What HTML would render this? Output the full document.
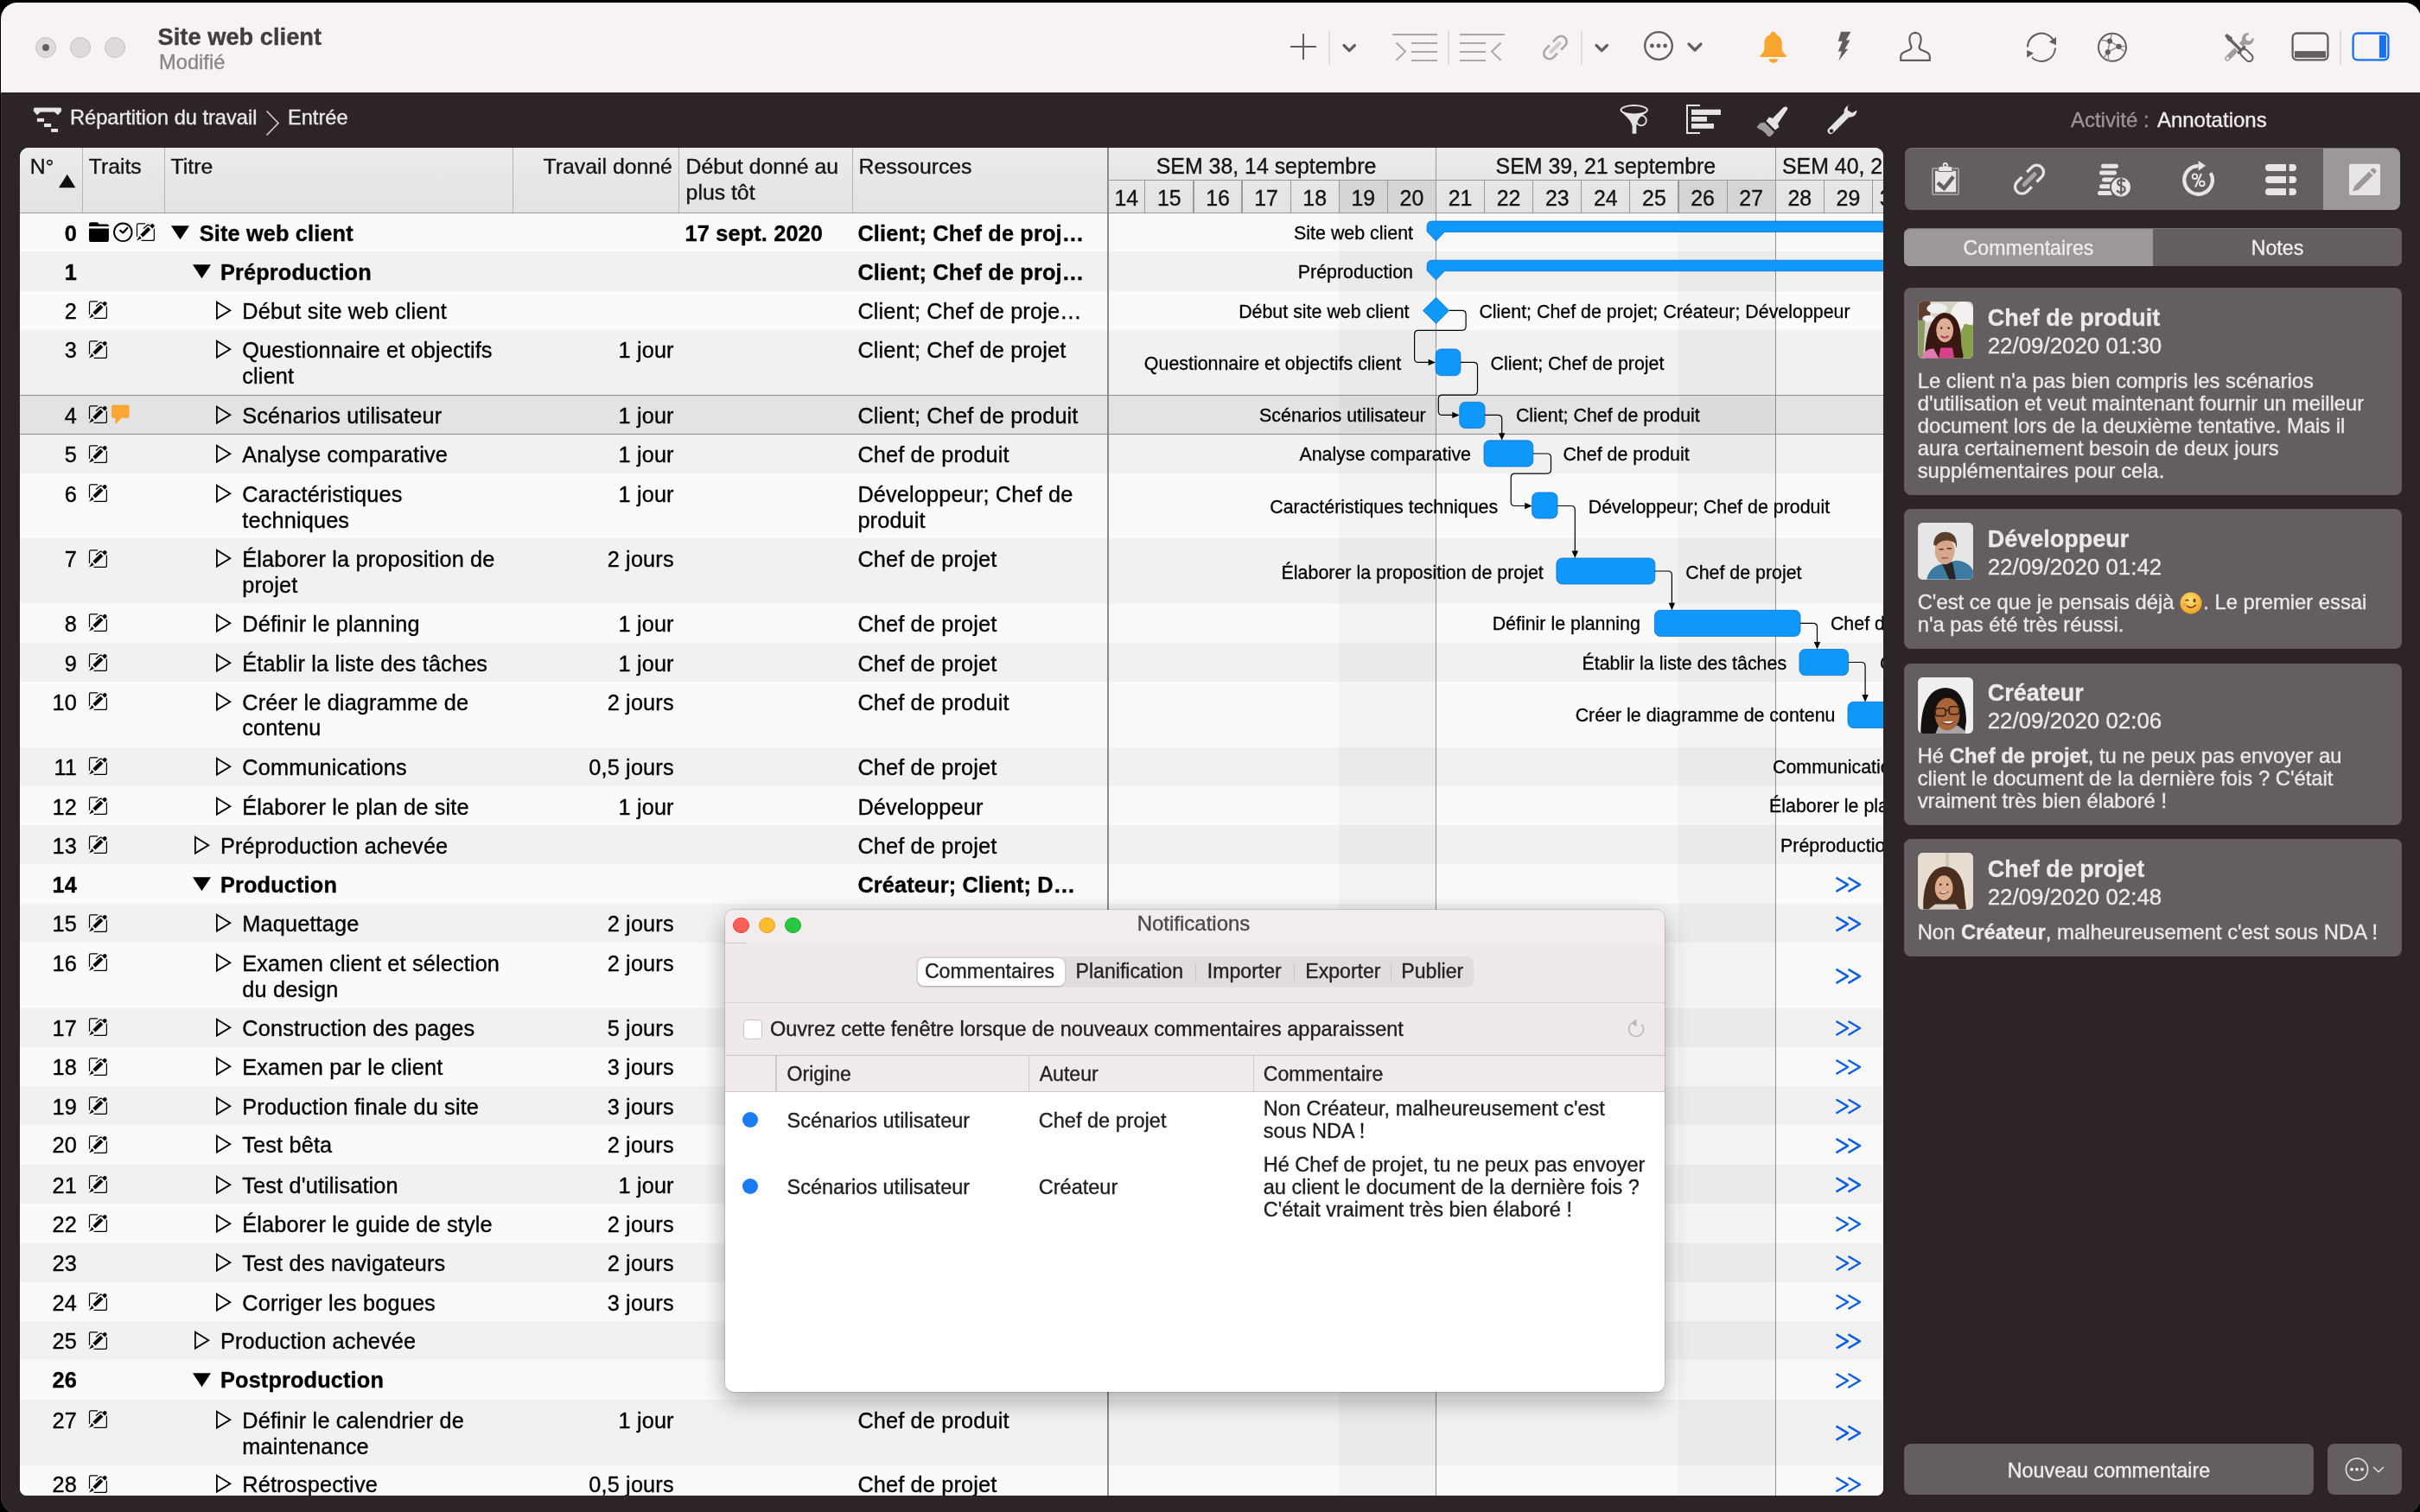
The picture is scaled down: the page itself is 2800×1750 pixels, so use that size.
<!DOCTYPE html>
<html><head><meta charset="utf-8"><title>Site web client</title>
<style>
*{box-sizing:border-box;margin:0;padding:0}
html,body{width:2800px;height:1750px;overflow:hidden;background:#000;font-family:"Liberation Sans", sans-serif}
.win{will-change:transform;position:absolute;left:1px;top:3px;width:2800px;height:1748.6px;border-radius:19px;overflow:hidden;background:#2d2428}
.pg{position:absolute;left:-1px;top:-3px;width:2800px;height:1750px}
.a{position:absolute;white-space:nowrap;-webkit-text-stroke:0.35px currentColor}
svg{position:absolute;overflow:visible}
.tb{position:absolute;left:0;top:0;width:2800px;height:107px;background:#f7f2f3}
.row{position:absolute;left:23px;width:1259px}
.gr{position:absolute;left:1282px;width:898px}
.t{position:absolute;font-size:25.3px;line-height:29.7px;color:#000;white-space:nowrap;letter-spacing:0.15px;-webkit-text-stroke:0.35px currentColor}
.b{font-weight:bold}
.gl{position:absolute;font-size:21.4px;line-height:26px;color:#000;white-space:nowrap;-webkit-text-stroke:0.3px currentColor}

.av{background:#ccc}
.w1{background:radial-gradient(ellipse 30% 34% at 50% 48%,#e8b59a 0 60%,transparent 62%),radial-gradient(ellipse 45% 55% at 48% 55%,#4a2418 0 70%,transparent 72%),linear-gradient(160deg,#d8d2c4,#a8b880 60%,#c0407a 85%)}
.m1{background:radial-gradient(ellipse 26% 30% at 50% 45%,#d9a88e 0 60%,transparent 62%),radial-gradient(ellipse 32% 22% at 50% 22%,#7a5a40 0 70%,transparent 72%),linear-gradient(#e8e8e6 0 70%,#3f7fb0 70%)}
.w2{background:radial-gradient(ellipse 28% 32% at 52% 55%,#8a5232 0 60%,transparent 62%),radial-gradient(ellipse 42% 50% at 50% 60%,#1a1512 0 70%,transparent 72%),linear-gradient(#f2f0ee,#e6e4e2)}
.w3{background:radial-gradient(ellipse 26% 30% at 50% 55%,#e0b49a 0 60%,transparent 62%),radial-gradient(ellipse 42% 46% at 50% 58%,#5a3a28 0 70%,transparent 72%),linear-gradient(#e8e2d8,#d8d0c4)}
.emo{display:inline-block;width:26px;height:26px;border-radius:50%;background:radial-gradient(circle at 45% 40%,#ffd86a,#f4a820);vertical-align:-5px;margin:0 2px}
</style></head>
<body>
<svg width="0" height="0" style="position:absolute">
<defs>
<symbol id="note" viewBox="0 0 28 28">
 <path d="M12.6 4.8H5.2Q3.5 4.8 3.5 6.5V19.4M23.4 11.1V22.4Q23.4 24.4 21.4 24.4H9.1" fill="none" stroke="#000" stroke-width="1.2" stroke-linecap="round"/>
 <path d="M7.4 17.6L16.3 8.7L19.3 11.7L10.4 20.6Z" fill="#000"/>
 <path d="M3.1 24.6L6.5 19.1L8.7 21.9Z" fill="#000"/>
 <path d="M18.2 7.4L20 5.6Q21.4 4.4 22.8 5.7L23.1 6Q24.3 7.5 23 8.9L21.1 10.6Z" fill="#000"/>
 <path d="M11.1 10.6L15.6 6.5Q16.6 5.7 18.2 7" fill="none" stroke="#000" stroke-width="1.3"/>
</symbol>
<symbol id="folder" viewBox="0 0 60 40">
 <path d="M3 12.5Q3 10.2 5.3 10.2H11.5Q13.2 10.2 14 11.5L14.6 12.6H23.8Q25.9 12.6 25.9 14.5V15H3Z" fill="#000"/>
 <path d="M3 17.6H25.9V31Q25.9 33 23.9 33H5Q3 33 3 31Z" fill="#000"/>
 <circle cx="42.3" cy="21.8" r="10.3" fill="none" stroke="#000" stroke-width="1.9"/>
 <path d="M39.2 19.8L42.3 22.4L47.3 16.9" fill="none" stroke="#000" stroke-width="2.2" stroke-linecap="round" stroke-linejoin="round"/>
</symbol>
<symbol id="bubble" viewBox="0 0 30 40">
 <path d="M5 10.7H21.6Q23.6 10.7 23.6 12.7V23.7Q23.6 25.7 21.6 25.7H14.5L7.5 33.5V25.7H5Q3 25.7 3 23.7V12.7Q3 10.7 5 10.7Z" fill="#fda631"/>
</symbol>
</defs></svg>
<div class="win"><div class="pg">
<div class="tb"></div>
<div class="a" style="left:41px;top:43px;width:24px;height:24px;border-radius:50%;background:#dedadb;border:1px solid #c4bfc0"></div><div class="a" style="left:81px;top:43px;width:24px;height:24px;border-radius:50%;background:#dedadb;border:1px solid #c4bfc0"></div><div class="a" style="left:121px;top:43px;width:24px;height:24px;border-radius:50%;background:#dedadb;border:1px solid #c4bfc0"></div><div class="a" style="left:49px;top:51px;width:8px;height:8px;border-radius:50%;background:#625d5f"></div><div class="a" style="left:182.5px;top:26.8px;font-size:27.3px;line-height:32px;font-weight:bold;color:#413c3e">Site web client</div><div class="a" style="left:184px;top:57.5px;font-size:23.7px;line-height:28px;color:#8a8587">Modifié</div>
<svg style="left:0;top:0" width="2800" height="107">
 <g stroke="#615c5e" stroke-width="2" fill="none">
  <path d="M1493 54H1523M1508 39V69"/>
 </g>
 <g stroke="#e2dddf" stroke-width="2"><path d="M1538 35V75M1676 35V75M1830 35V75M2708 35V75"/></g>
 <g stroke="#615c5e" stroke-width="3.2" fill="none" stroke-linecap="round" stroke-linejoin="round">
  <path d="M1555 52.5L1561.2 58.7L1567.4 52.5"/>
  <path d="M1847 52.5L1853.2 58.7L1859.4 52.5"/>
  <path d="M1954 51L1961 58L1968 51"/>
 </g>
 <g stroke="#aca6a8" stroke-width="2" fill="none">
  <path d="M1611 40H1663M1633 50H1663M1633 60H1663M1633 70H1663M1615.5 49.5L1626 59.6L1615.5 69.7"/>
  <path d="M1689 40H1741M1689 50H1719M1689 60H1719M1689 70H1719M1736.5 49.5L1726 59.6L1736.5 69.7"/>
 </g>
 <g transform="translate(1799.5 55) rotate(-45)" fill="none" stroke="#aca6a8" stroke-width="2.6">
  <path d="M-3 -6.5H-9.5A6.5 6.5 0 0 0 -9.5 6.5H-3"/>
  <path d="M3 -6.5H9.5A6.5 6.5 0 0 1 9.5 6.5H3"/>
  <path d="M-7 0H7" stroke="#d2cdce" stroke-width="4.2" stroke-linecap="round"/>
 </g>
 <circle cx="1919" cy="53" r="15.8" fill="none" stroke="#615c5e" stroke-width="2.3"/>
 <g fill="#615c5e"><circle cx="1911.4" cy="53" r="2.4"/><circle cx="1919" cy="53" r="2.4"/><circle cx="1926.6" cy="53" r="2.4"/></g>
 <path fill="#f9a630" d="M2051.6 36.8c-2 0-3.3 1.4-3.6 3.4c-4.5 1.4-6.6 5.3-6.6 10.3v5.6c0 3-1.8 5.6-4.9 8.3c-0.8 0.7-0.7 1.5 0.3 1.5h29.6c1 0 1.1-0.8 0.3-1.5c-3.1-2.7-4.9-5.3-4.9-8.3v-5.6c0-5-2.1-8.9-6.6-10.3c-0.3-2-1.6-3.4-3.6-3.4zM2046.8 68.2h10.2c0 2.5-2.2 4.5-5.1 4.5s-5.1-2-5.1-4.5z"/>
 <path fill="#615c5e" d="M2130 36.8L2141.4 36.8L2135.9 46.4L2140.5 46.4L2134.5 56.8L2138.2 56.8L2127.3 70.5L2130.9 59.5L2126.8 59.5L2131.8 47.7L2126.8 47.7Z"/>
 <path fill="none" stroke="#615c5e" stroke-width="2.2" stroke-linejoin="round" d="M2216 37.9c-4 0-6.6 3.2-6.6 7.5c0 2.8 0.5 5 1.4 6.8c0.7 1.5 0.8 3.6-0.3 4.6c-1 1-5.6 2.8-7.6 3.6c-2.3 1-3.7 2.6-3.7 5.6v3.9h33.6v-3.9c0-3-1.4-4.6-3.7-5.6c-2-0.8-6.6-2.6-7.6-3.6c-1.1-1-1-3.1-0.3-4.6c0.9-1.8 1.4-4 1.4-6.8c0-4.3-2.6-7.5-6.6-7.5z"/>
 <g fill="none" stroke="#615c5e" stroke-width="2">
  <path d="M2346 54.5A16 16 0 0 1 2375.5 46"/>
  <path d="M2378 55.5A16 16 0 0 1 2351 66.5"/>
 </g>
 <g fill="#615c5e"><path d="M2379 43L2379 52.3L2370.9 48.6Z"/><path d="M2345.2 57.9L2345.2 66.8L2353 61.6Z"/></g>
 <circle cx="2444" cy="54.8" r="16" fill="none" stroke="#615c5e" stroke-width="2"/>
 <g stroke="#9a9597" stroke-width="1.6" fill="none">
  <path d="M2441 47.6L2451.5 53.8L2438.8 60.3L2441 47.6M2441 47.6L2443.6 39.5M2441 47.6L2431 46.5M2451.5 53.8L2459.5 53.5M2451.5 53.8L2457.5 59.5M2438.8 60.3L2434 67M2438.8 60.3L2440 71"/>
 </g>
 <g fill="#615c5e"><circle cx="2441" cy="47.6" r="3.1"/><circle cx="2451.5" cy="53.8" r="3.1"/><circle cx="2438.8" cy="60.3" r="3.1"/></g>
 <g>
  <path d="M2577.3 67.6L2597 47.9" stroke="#a09c9d" stroke-width="6" stroke-linecap="round"/>
  <circle cx="2600.8" cy="45" r="6.9" fill="#a09c9d"/>
  <circle cx="2602" cy="43.8" r="3.6" fill="#f7f2f3"/>
  <path d="M2602 43.8L2601.5 35L2612 35L2612 46L2610 44.3Z" fill="#f7f2f3"/>
  <circle cx="2577.4" cy="67.5" r="1.7" fill="#f7f2f3"/>
  <path d="M2578.5 43L2593.5 58" stroke="#f7f2f3" stroke-width="7.5"/>
  <path d="M2574.1 41.3L2576.4 39.1L2582.8 43.6L2582.8 44.9L2580.8 47.7L2578.3 47.7Z" fill="#676163"/>
  <path d="M2580 45.5L2592.5 58" stroke="#676163" stroke-width="3.6"/>
  <path d="M2590.3 61L2596.8 54.5" stroke="#676163" stroke-width="3.2" stroke-linecap="round"/>
  <rect x="-8.3" y="-4.3" width="16.6" height="8.6" rx="4.3" transform="translate(2599.4 64) rotate(45)" fill="#f7f2f3" stroke="#676163" stroke-width="2.1"/>
 </g>
 <rect x="2652.6" y="38.5" width="40.8" height="30.8" rx="5" fill="none" stroke="#615c5e" stroke-width="2.3"/>
 <rect x="2655" y="59.1" width="36" height="7.7" fill="#615c5e"/>
 <rect x="2722.6" y="38.5" width="40.8" height="30.8" rx="5" fill="none" stroke="#1570f2" stroke-width="2.3"/>
 <rect x="2752.9" y="40.9" width="8" height="25.9" fill="#1570f2"/>
</svg>

<svg style="left:0;top:0" width="400" height="171">
 <path fill="#e6e3e4" stroke="#e6e3e4" stroke-width="0.8" stroke-linejoin="round" d="M40.2 125H69.9Q70.7 125 70.7 126V128.7L67 132.7L62.8 129.2H46.9L42.9 132.7L39.3 128.7V126Q39.3 125 40.2 125Z"/>
 <g fill="#e6e3e4"><rect x="42.9" y="136.9" width="8.1" height="4"/><rect x="51" y="143" width="8.1" height="4"/><rect x="59.1" y="149" width="7.9" height="3.9"/></g>
 <path d="M308.5 128.5L322 142.5L308.5 156.5" fill="none" stroke="#cfcbcc" stroke-width="1.7"/>
</svg>
<div class="a" style="left:81px;top:122px;font-size:23.6px;line-height:28px;color:#ebe8e9">Répartition du travail</div>
<div class="a" style="left:333px;top:122px;font-size:23.6px;line-height:28px;color:#ebe8e9">Entrée</div>
<svg style="left:0;top:0" width="2200" height="171">
 <g fill="#e6e3e4">
  <ellipse cx="1890.7" cy="127.3" rx="15.2" ry="5.2" fill="none" stroke="#e6e3e4" stroke-width="2"/>
  <path d="M1876 129C1880 134 1887 138 1888.6 146V154.8H1893.3V146C1894 140 1896 136 1904.8 130C1900 133 1882 133 1876 129Z"/>
  <circle cx="1899" cy="139.5" r="5.8" fill="none" stroke="#e6e3e4" stroke-width="1.8"/>
  <path d="M1952 122V154M1951 122H1967M1951 154H1967" stroke="#e6e3e4" stroke-width="2" fill="none"/>
  <rect x="1957" y="126.7" width="34" height="6.3"/><rect x="1957" y="135" width="18" height="5.7"/><rect x="1957" y="143" width="26" height="5.8"/>
  <path d="M2066 123.5c1.5 0 2.8 1.4 2.3 2.8L2057 143L2058.5 147L2054 150.5L2043.5 140L2047 135.5L2051 137L2063.5 124.2c0.7-0.5 1.6-0.7 2.5-0.7z"/>
  <path fill="#a09b9d" d="M2041.5 141.5L2053 153L2049 157.5C2047 158.5 2045.5 158 2044.5 156.5L2043 154.5L2039 151C2036.5 150 2034 148.5 2032.5 147L2036.5 142.5z"/>
  <path d="M2141.8 121.5c-5 0-8.7 4-8.2 9.3l-18 18c-2.7 2.7-0.2 7 3.3 6.3c1-0.2 1.6-0.7 2.2-1.3l18-18c5.3 0.5 9.3-3.2 9.3-8.2l-5.3 3.2l-5.3-3.3l0.2-5.7z"/>
  <circle cx="2119" cy="151.5" r="2.2" fill="#2d2428"/>
 </g>
</svg>

<div class="a" style="left:23px;top:171px;width:2156.2px;height:1560.4px;border-radius:10px 9.5px 8px 8px;overflow:hidden;background:#fafafa"><div class="a" style="left:-23px;top:-171px;width:2800px;height:1750px"><div class="a" style="left:23px;top:247.00px;width:2157px;height:44.00px;background:#fafafa"></div><div class="a" style="left:23px;top:291.00px;width:2157px;height:45.70px;background:#f1f1f1"></div><div class="a" style="left:23px;top:336.70px;width:2157px;height:44.90px;background:#fafafa"></div><div class="a" style="left:23px;top:381.60px;width:2157px;height:75.40px;background:#f1f1f1"></div><div class="a" style="left:23px;top:457.00px;width:2157px;height:45.50px;background:#e3e3e3"></div><div class="a" style="left:23px;top:502.50px;width:2157px;height:45.80px;background:#f1f1f1"></div><div class="a" style="left:23px;top:548.30px;width:2157px;height:74.50px;background:#fafafa"></div><div class="a" style="left:23px;top:622.80px;width:2157px;height:76.20px;background:#f1f1f1"></div><div class="a" style="left:23px;top:699.00px;width:2157px;height:44.80px;background:#fafafa"></div><div class="a" style="left:23px;top:743.80px;width:2157px;height:45.10px;background:#f1f1f1"></div><div class="a" style="left:23px;top:788.90px;width:2157px;height:76.20px;background:#fafafa"></div><div class="a" style="left:23px;top:865.10px;width:2157px;height:44.90px;background:#f1f1f1"></div><div class="a" style="left:23px;top:910.00px;width:2157px;height:44.90px;background:#fafafa"></div><div class="a" style="left:23px;top:954.90px;width:2157px;height:45.50px;background:#f1f1f1"></div><div class="a" style="left:23px;top:1000.40px;width:2157px;height:45.30px;background:#fafafa"></div><div class="a" style="left:23px;top:1045.70px;width:2157px;height:45.70px;background:#f1f1f1"></div><div class="a" style="left:23px;top:1091.40px;width:2157px;height:75.40px;background:#fafafa"></div><div class="a" style="left:23px;top:1166.80px;width:2157px;height:44.80px;background:#f1f1f1"></div><div class="a" style="left:23px;top:1211.60px;width:2157px;height:45.20px;background:#fafafa"></div><div class="a" style="left:23px;top:1256.80px;width:2157px;height:45.70px;background:#f1f1f1"></div><div class="a" style="left:23px;top:1302.50px;width:2157px;height:45.70px;background:#fafafa"></div><div class="a" style="left:23px;top:1348.20px;width:2157px;height:44.80px;background:#f1f1f1"></div><div class="a" style="left:23px;top:1393.00px;width:2157px;height:45.80px;background:#fafafa"></div><div class="a" style="left:23px;top:1438.80px;width:2157px;height:44.90px;background:#f1f1f1"></div><div class="a" style="left:23px;top:1483.70px;width:2157px;height:45.00px;background:#fafafa"></div><div class="a" style="left:23px;top:1528.70px;width:2157px;height:45.70px;background:#f1f1f1"></div><div class="a" style="left:23px;top:1574.40px;width:2157px;height:45.50px;background:#fafafa"></div><div class="a" style="left:23px;top:1619.90px;width:2157px;height:75.90px;background:#f1f1f1"></div><div class="a" style="left:23px;top:1695.80px;width:2157px;height:35.60px;background:#fafafa"></div><div class="a" style="left:23px;top:456.50px;width:2157px;height:1.2px;background:#8f8f8f"></div><div class="a" style="left:23px;top:501.90px;width:2157px;height:1.2px;background:#8f8f8f"></div><div class="a" style="left:1549.25px;top:246px;width:112.22px;height:1500px;background:rgba(0,0,0,0.028)"></div><div class="a" style="left:1942.02px;top:246px;width:112.22px;height:1500px;background:rgba(0,0,0,0.028)"></div><div class="a" style="left:23px;top:171px;width:2157px;height:75.5px;background:linear-gradient(#ececec,#e2e2e2)"></div><div class="a" style="left:1549.25px;top:208.4px;width:56.11px;height:37.6px;background:#d5d5d5"></div><div class="a" style="left:1605.36px;top:208.4px;width:56.11px;height:37.6px;background:#d5d5d5"></div><div class="a" style="left:1942.02px;top:208.4px;width:56.11px;height:37.6px;background:#d5d5d5"></div><div class="a" style="left:1998.13px;top:208.4px;width:56.11px;height:37.6px;background:#d5d5d5"></div><div class="a" style="left:23px;top:245.6px;width:2157px;height:1.3px;background:#9a9a9a"></div><div class="a" style="left:94.5px;top:171px;width:1.2px;height:75px;background:#b5b5b5"></div><div class="a" style="left:189.5px;top:171px;width:1.2px;height:75px;background:#b5b5b5"></div><div class="a" style="left:592.9px;top:171px;width:1.2px;height:75px;background:#b5b5b5"></div><div class="a" style="left:784.8px;top:171px;width:1.2px;height:75px;background:#b5b5b5"></div><div class="a" style="left:985.9px;top:171px;width:1.2px;height:75px;background:#b5b5b5"></div><div class="a" style="left:1282px;top:208px;width:900px;height:1.2px;background:#999"></div><div class="a" style="left:1660.90px;top:171px;width:1.2px;height:37.4px;background:#999"></div><div class="a" style="left:2053.70px;top:171px;width:1.2px;height:37.4px;background:#999"></div><div class="a" style="left:1324.21px;top:208.4px;width:1.2px;height:37.6px;background:#999"></div><div class="a" style="left:1380.32px;top:208.4px;width:1.2px;height:37.6px;background:#999"></div><div class="a" style="left:1436.43px;top:208.4px;width:1.2px;height:37.6px;background:#999"></div><div class="a" style="left:1492.54px;top:208.4px;width:1.2px;height:37.6px;background:#999"></div><div class="a" style="left:1548.65px;top:208.4px;width:1.2px;height:37.6px;background:#999"></div><div class="a" style="left:1604.76px;top:208.4px;width:1.2px;height:37.6px;background:#999"></div><div class="a" style="left:1660.87px;top:208.4px;width:1.2px;height:37.6px;background:#999"></div><div class="a" style="left:1716.98px;top:208.4px;width:1.2px;height:37.6px;background:#999"></div><div class="a" style="left:1773.09px;top:208.4px;width:1.2px;height:37.6px;background:#999"></div><div class="a" style="left:1829.20px;top:208.4px;width:1.2px;height:37.6px;background:#999"></div><div class="a" style="left:1885.31px;top:208.4px;width:1.2px;height:37.6px;background:#999"></div><div class="a" style="left:1941.42px;top:208.4px;width:1.2px;height:37.6px;background:#999"></div><div class="a" style="left:1997.53px;top:208.4px;width:1.2px;height:37.6px;background:#999"></div><div class="a" style="left:2053.64px;top:208.4px;width:1.2px;height:37.6px;background:#999"></div><div class="a" style="left:2109.75px;top:208.4px;width:1.2px;height:37.6px;background:#999"></div><div class="a" style="left:2165.86px;top:208.4px;width:1.2px;height:37.6px;background:#999"></div><div class="a" style="left:34.70px;top:178.00px;font-size:24.8px;line-height:30px;color:#141414">N°</div><svg style="left:0;top:0" width="100" height="230"><path d="M68 217.2H87.4L77.7 201.8Z" fill="#111"/></svg><div class="a" style="left:102.70px;top:178.00px;font-size:24.8px;line-height:30px;color:#141414">Traits</div><div class="a" style="left:197.60px;top:178.00px;font-size:24.8px;line-height:30px;color:#141414">Titre</div><div class="a" style="right:2022.10px;top:178.00px;font-size:24.8px;line-height:30px;color:#141414;text-align:right">Travail donné</div><div class="a" style="left:793.60px;top:177.60px;font-size:24.8px;line-height:30px;color:#141414">Début donné au</div><div class="a" style="left:793.60px;top:207.60px;font-size:24.8px;line-height:30px;color:#141414">plus tôt</div><div class="a" style="left:993.60px;top:178.00px;font-size:24.8px;line-height:30px;color:#141414">Ressources</div><div class="a" style="left:1315.00px;width:300px;top:177.47px;font-size:24.9px;line-height:30px;color:#141414;text-align:center">SEM 38, 14 septembre</div><div class="a" style="left:1707.90px;width:300px;top:177.47px;font-size:24.9px;line-height:30px;color:#141414;text-align:center">SEM 39, 21 septembre</div><div class="a" style="left:2062.00px;top:177.47px;font-size:24.9px;line-height:30px;color:#141414">SEM 40, 28 septembre</div><div class="a" style="left:1153.30px;width:300px;top:213.97px;font-size:24.9px;line-height:30px;color:#141414;text-align:center">14</div><div class="a" style="left:1202.86px;width:300px;top:213.97px;font-size:24.9px;line-height:30px;color:#141414;text-align:center">15</div><div class="a" style="left:1258.97px;width:300px;top:213.97px;font-size:24.9px;line-height:30px;color:#141414;text-align:center">16</div><div class="a" style="left:1315.08px;width:300px;top:213.97px;font-size:24.9px;line-height:30px;color:#141414;text-align:center">17</div><div class="a" style="left:1371.19px;width:300px;top:213.97px;font-size:24.9px;line-height:30px;color:#141414;text-align:center">18</div><div class="a" style="left:1427.30px;width:300px;top:213.97px;font-size:24.9px;line-height:30px;color:#141414;text-align:center">19</div><div class="a" style="left:1483.41px;width:300px;top:213.97px;font-size:24.9px;line-height:30px;color:#141414;text-align:center">20</div><div class="a" style="left:1539.52px;width:300px;top:213.97px;font-size:24.9px;line-height:30px;color:#141414;text-align:center">21</div><div class="a" style="left:1595.63px;width:300px;top:213.97px;font-size:24.9px;line-height:30px;color:#141414;text-align:center">22</div><div class="a" style="left:1651.74px;width:300px;top:213.97px;font-size:24.9px;line-height:30px;color:#141414;text-align:center">23</div><div class="a" style="left:1707.85px;width:300px;top:213.97px;font-size:24.9px;line-height:30px;color:#141414;text-align:center">24</div><div class="a" style="left:1763.96px;width:300px;top:213.97px;font-size:24.9px;line-height:30px;color:#141414;text-align:center">25</div><div class="a" style="left:1820.07px;width:300px;top:213.97px;font-size:24.9px;line-height:30px;color:#141414;text-align:center">26</div><div class="a" style="left:1876.18px;width:300px;top:213.97px;font-size:24.9px;line-height:30px;color:#141414;text-align:center">27</div><div class="a" style="left:1932.29px;width:300px;top:213.97px;font-size:24.9px;line-height:30px;color:#141414;text-align:center">28</div><div class="a" style="left:1988.40px;width:300px;top:213.97px;font-size:24.9px;line-height:30px;color:#141414;text-align:center">29</div><div class="a" style="left:2038.50px;width:300px;top:213.97px;font-size:24.9px;line-height:30px;color:#141414;text-align:center">30</div><div class="a" style="left:1281.4px;top:171px;width:1.3px;height:1570px;background:#8c8c8c"></div><div class="a" style="left:1660.90px;top:246px;width:1.2px;height:1500px;background:#8e8e8e"></div><div class="a" style="left:2053.70px;top:246px;width:1.2px;height:1500px;background:#8e8e8e"></div><div class="t" style="right:2711.00px;top:255.99px;text-align:right;font-weight:bold">0</div><svg style="left:155.3px;top:254.20px" width="28" height="28"><use href="#note"/></svg><svg style="left:100px;top:247.00px" width="60" height="40"><use href="#folder"/></svg><svg style="left:197.9px;top:247.20px" width="22" height="40"><path d="M0 14.3H21L10.5 30.2Z" fill="#000"/></svg><div class="t" style="left:230.80px;top:255.99px;font-weight:bold">Site web client</div><div class="t" style="left:792.60px;top:255.99px;font-weight:bold">17 sept. 2020</div><div class="t" style="left:992.40px;top:255.99px;font-weight:bold">Client; Chef de proj…</div><div class="t" style="right:2711.00px;top:300.79px;text-align:right;font-weight:bold">1</div><svg style="left:223.3px;top:292.00px" width="22" height="40"><path d="M0 14.3H21L10.5 30.2Z" fill="#000"/></svg><div class="t" style="left:255.00px;top:300.79px;font-weight:bold">Préproduction</div><div class="t" style="left:992.40px;top:300.79px;font-weight:bold">Client; Chef de proj…</div><div class="t" style="right:2711.00px;top:345.69px;text-align:right">2</div><svg style="left:100px;top:343.90px" width="28" height="28"><use href="#note"/></svg><svg style="left:249.6px;top:336.60px" width="22" height="40"><path d="M0.9 12.7L16.3 22.2L0.9 31.6Z" fill="none" stroke="#000" stroke-width="1.8" stroke-linejoin="miter"/></svg><div class="t" style="left:280.30px;top:345.69px">Début site web client</div><div class="t" style="left:992.40px;top:345.69px">Client; Chef de proje…</div><div class="t" style="right:2711.00px;top:391.39px;text-align:right">3</div><svg style="left:100px;top:389.60px" width="28" height="28"><use href="#note"/></svg><svg style="left:249.6px;top:382.30px" width="22" height="40"><path d="M0.9 12.7L16.3 22.2L0.9 31.6Z" fill="none" stroke="#000" stroke-width="1.8" stroke-linejoin="miter"/></svg><div class="t" style="left:280.30px;top:391.39px">Questionnaire et objectifs<br>client</div><div class="t" style="right:2020.30px;top:391.39px;text-align:right">1 jour</div><div class="t" style="left:992.40px;top:391.39px">Client; Chef de projet</div><div class="t" style="right:2711.00px;top:466.79px;text-align:right">4</div><svg style="left:100px;top:465.00px" width="28" height="28"><use href="#note"/></svg><svg style="left:126px;top:457.80px" width="30" height="40"><use href="#bubble"/></svg><svg style="left:249.6px;top:457.70px" width="22" height="40"><path d="M0.9 12.7L16.3 22.2L0.9 31.6Z" fill="none" stroke="#000" stroke-width="1.8" stroke-linejoin="miter"/></svg><div class="t" style="left:280.30px;top:466.79px">Scénarios utilisateur</div><div class="t" style="right:2020.30px;top:466.79px;text-align:right">1 jour</div><div class="t" style="left:992.40px;top:466.79px">Client; Chef de produit</div><div class="t" style="right:2711.00px;top:512.39px;text-align:right">5</div><svg style="left:100px;top:510.60px" width="28" height="28"><use href="#note"/></svg><svg style="left:249.6px;top:503.30px" width="22" height="40"><path d="M0.9 12.7L16.3 22.2L0.9 31.6Z" fill="none" stroke="#000" stroke-width="1.8" stroke-linejoin="miter"/></svg><div class="t" style="left:280.30px;top:512.39px">Analyse comparative</div><div class="t" style="right:2020.30px;top:512.39px;text-align:right">1 jour</div><div class="t" style="left:992.40px;top:512.39px">Chef de produit</div><div class="t" style="right:2711.00px;top:558.09px;text-align:right">6</div><svg style="left:100px;top:556.30px" width="28" height="28"><use href="#note"/></svg><svg style="left:249.6px;top:549.00px" width="22" height="40"><path d="M0.9 12.7L16.3 22.2L0.9 31.6Z" fill="none" stroke="#000" stroke-width="1.8" stroke-linejoin="miter"/></svg><div class="t" style="left:280.30px;top:558.09px">Caractéristiques<br>techniques</div><div class="t" style="right:2020.30px;top:558.09px;text-align:right">1 jour</div><div class="t" style="left:992.40px;top:558.09px">Développeur; Chef de<br>produit</div><div class="t" style="right:2711.00px;top:633.39px;text-align:right">7</div><svg style="left:100px;top:631.60px" width="28" height="28"><use href="#note"/></svg><svg style="left:249.6px;top:624.30px" width="22" height="40"><path d="M0.9 12.7L16.3 22.2L0.9 31.6Z" fill="none" stroke="#000" stroke-width="1.8" stroke-linejoin="miter"/></svg><div class="t" style="left:280.30px;top:633.39px">Élaborer la proposition de<br>projet</div><div class="t" style="right:2020.30px;top:633.39px;text-align:right">2 jours</div><div class="t" style="left:992.40px;top:633.39px">Chef de projet</div><div class="t" style="right:2711.00px;top:707.89px;text-align:right">8</div><svg style="left:100px;top:706.10px" width="28" height="28"><use href="#note"/></svg><svg style="left:249.6px;top:698.80px" width="22" height="40"><path d="M0.9 12.7L16.3 22.2L0.9 31.6Z" fill="none" stroke="#000" stroke-width="1.8" stroke-linejoin="miter"/></svg><div class="t" style="left:280.30px;top:707.89px">Définir le planning</div><div class="t" style="right:2020.30px;top:707.89px;text-align:right">1 jour</div><div class="t" style="left:992.40px;top:707.89px">Chef de projet</div><div class="t" style="right:2711.00px;top:753.89px;text-align:right">9</div><svg style="left:100px;top:752.10px" width="28" height="28"><use href="#note"/></svg><svg style="left:249.6px;top:744.80px" width="22" height="40"><path d="M0.9 12.7L16.3 22.2L0.9 31.6Z" fill="none" stroke="#000" stroke-width="1.8" stroke-linejoin="miter"/></svg><div class="t" style="left:280.30px;top:753.89px">Établir la liste des tâches</div><div class="t" style="right:2020.30px;top:753.89px;text-align:right">1 jour</div><div class="t" style="left:992.40px;top:753.89px">Chef de projet</div><div class="t" style="right:2711.00px;top:798.79px;text-align:right">10</div><svg style="left:100px;top:797.00px" width="28" height="28"><use href="#note"/></svg><svg style="left:249.6px;top:789.70px" width="22" height="40"><path d="M0.9 12.7L16.3 22.2L0.9 31.6Z" fill="none" stroke="#000" stroke-width="1.8" stroke-linejoin="miter"/></svg><div class="t" style="left:280.30px;top:798.79px">Créer le diagramme de<br>contenu</div><div class="t" style="right:2020.30px;top:798.79px;text-align:right">2 jours</div><div class="t" style="left:992.40px;top:798.79px">Chef de produit</div><div class="t" style="right:2711.00px;top:874.09px;text-align:right">11</div><svg style="left:100px;top:872.30px" width="28" height="28"><use href="#note"/></svg><svg style="left:249.6px;top:865.00px" width="22" height="40"><path d="M0.9 12.7L16.3 22.2L0.9 31.6Z" fill="none" stroke="#000" stroke-width="1.8" stroke-linejoin="miter"/></svg><div class="t" style="left:280.30px;top:874.09px">Communications</div><div class="t" style="right:2020.30px;top:874.09px;text-align:right">0,5 jours</div><div class="t" style="left:992.40px;top:874.09px">Chef de projet</div><div class="t" style="right:2711.00px;top:919.79px;text-align:right">12</div><svg style="left:100px;top:918.00px" width="28" height="28"><use href="#note"/></svg><svg style="left:249.6px;top:910.70px" width="22" height="40"><path d="M0.9 12.7L16.3 22.2L0.9 31.6Z" fill="none" stroke="#000" stroke-width="1.8" stroke-linejoin="miter"/></svg><div class="t" style="left:280.30px;top:919.79px">Élaborer le plan de site</div><div class="t" style="right:2020.30px;top:919.79px;text-align:right">1 jour</div><div class="t" style="left:992.40px;top:919.79px">Développeur</div><div class="t" style="right:2711.00px;top:964.69px;text-align:right">13</div><svg style="left:100px;top:962.90px" width="28" height="28"><use href="#note"/></svg><svg style="left:225px;top:955.60px" width="22" height="40"><path d="M0.9 12.7L16.3 22.2L0.9 31.6Z" fill="none" stroke="#000" stroke-width="1.8" stroke-linejoin="miter"/></svg><div class="t" style="left:255.00px;top:964.69px">Préproduction achevée</div><div class="t" style="left:992.40px;top:964.69px">Chef de projet</div><div class="t" style="right:2711.00px;top:1009.79px;text-align:right;font-weight:bold">14</div><svg style="left:223.3px;top:1001.00px" width="22" height="40"><path d="M0 14.3H21L10.5 30.2Z" fill="#000"/></svg><div class="t" style="left:255.00px;top:1009.79px;font-weight:bold">Production</div><div class="t" style="left:992.40px;top:1009.79px;font-weight:bold">Créateur; Client; D…</div><div class="t" style="right:2711.00px;top:1055.49px;text-align:right">15</div><svg style="left:100px;top:1053.70px" width="28" height="28"><use href="#note"/></svg><svg style="left:249.6px;top:1046.40px" width="22" height="40"><path d="M0.9 12.7L16.3 22.2L0.9 31.6Z" fill="none" stroke="#000" stroke-width="1.8" stroke-linejoin="miter"/></svg><div class="t" style="left:280.30px;top:1055.49px">Maquettage</div><div class="t" style="right:2020.30px;top:1055.49px;text-align:right">2 jours</div><div class="t" style="right:2711.00px;top:1101.19px;text-align:right">16</div><svg style="left:100px;top:1099.40px" width="28" height="28"><use href="#note"/></svg><svg style="left:249.6px;top:1092.10px" width="22" height="40"><path d="M0.9 12.7L16.3 22.2L0.9 31.6Z" fill="none" stroke="#000" stroke-width="1.8" stroke-linejoin="miter"/></svg><div class="t" style="left:280.30px;top:1101.19px">Examen client et sélection<br>du design</div><div class="t" style="right:2020.30px;top:1101.19px;text-align:right">2 jours</div><div class="t" style="right:2711.00px;top:1175.79px;text-align:right">17</div><svg style="left:100px;top:1174.00px" width="28" height="28"><use href="#note"/></svg><svg style="left:249.6px;top:1166.70px" width="22" height="40"><path d="M0.9 12.7L16.3 22.2L0.9 31.6Z" fill="none" stroke="#000" stroke-width="1.8" stroke-linejoin="miter"/></svg><div class="t" style="left:280.30px;top:1175.79px">Construction des pages</div><div class="t" style="right:2020.30px;top:1175.79px;text-align:right">5 jours</div><div class="t" style="right:2711.00px;top:1221.49px;text-align:right">18</div><svg style="left:100px;top:1219.70px" width="28" height="28"><use href="#note"/></svg><svg style="left:249.6px;top:1212.40px" width="22" height="40"><path d="M0.9 12.7L16.3 22.2L0.9 31.6Z" fill="none" stroke="#000" stroke-width="1.8" stroke-linejoin="miter"/></svg><div class="t" style="left:280.30px;top:1221.49px">Examen par le client</div><div class="t" style="right:2020.30px;top:1221.49px;text-align:right">3 jours</div><div class="t" style="right:2711.00px;top:1266.59px;text-align:right">19</div><svg style="left:100px;top:1264.80px" width="28" height="28"><use href="#note"/></svg><svg style="left:249.6px;top:1257.50px" width="22" height="40"><path d="M0.9 12.7L16.3 22.2L0.9 31.6Z" fill="none" stroke="#000" stroke-width="1.8" stroke-linejoin="miter"/></svg><div class="t" style="left:280.30px;top:1266.59px">Production finale du site</div><div class="t" style="right:2020.30px;top:1266.59px;text-align:right">3 jours</div><div class="t" style="right:2711.00px;top:1311.49px;text-align:right">20</div><svg style="left:100px;top:1309.70px" width="28" height="28"><use href="#note"/></svg><svg style="left:249.6px;top:1302.40px" width="22" height="40"><path d="M0.9 12.7L16.3 22.2L0.9 31.6Z" fill="none" stroke="#000" stroke-width="1.8" stroke-linejoin="miter"/></svg><div class="t" style="left:280.30px;top:1311.49px">Test bêta</div><div class="t" style="right:2020.30px;top:1311.49px;text-align:right">2 jours</div><div class="t" style="right:2711.00px;top:1357.99px;text-align:right">21</div><svg style="left:100px;top:1356.20px" width="28" height="28"><use href="#note"/></svg><svg style="left:249.6px;top:1348.90px" width="22" height="40"><path d="M0.9 12.7L16.3 22.2L0.9 31.6Z" fill="none" stroke="#000" stroke-width="1.8" stroke-linejoin="miter"/></svg><div class="t" style="left:280.30px;top:1357.99px">Test d'utilisation</div><div class="t" style="right:2020.30px;top:1357.99px;text-align:right">1 jour</div><div class="t" style="right:2711.00px;top:1402.89px;text-align:right">22</div><svg style="left:100px;top:1401.10px" width="28" height="28"><use href="#note"/></svg><svg style="left:249.6px;top:1393.80px" width="22" height="40"><path d="M0.9 12.7L16.3 22.2L0.9 31.6Z" fill="none" stroke="#000" stroke-width="1.8" stroke-linejoin="miter"/></svg><div class="t" style="left:280.30px;top:1402.89px">Élaborer le guide de style</div><div class="t" style="right:2020.30px;top:1402.89px;text-align:right">2 jours</div><div class="t" style="right:2711.00px;top:1447.79px;text-align:right">23</div><svg style="left:249.6px;top:1438.70px" width="22" height="40"><path d="M0.9 12.7L16.3 22.2L0.9 31.6Z" fill="none" stroke="#000" stroke-width="1.8" stroke-linejoin="miter"/></svg><div class="t" style="left:280.30px;top:1447.79px">Test des navigateurs</div><div class="t" style="right:2020.30px;top:1447.79px;text-align:right">2 jours</div><div class="t" style="right:2711.00px;top:1493.69px;text-align:right">24</div><svg style="left:100px;top:1491.90px" width="28" height="28"><use href="#note"/></svg><svg style="left:249.6px;top:1484.60px" width="22" height="40"><path d="M0.9 12.7L16.3 22.2L0.9 31.6Z" fill="none" stroke="#000" stroke-width="1.8" stroke-linejoin="miter"/></svg><div class="t" style="left:280.30px;top:1493.69px">Corriger les bogues</div><div class="t" style="right:2020.30px;top:1493.69px;text-align:right">3 jours</div><div class="t" style="right:2711.00px;top:1538.49px;text-align:right">25</div><svg style="left:100px;top:1536.70px" width="28" height="28"><use href="#note"/></svg><svg style="left:225px;top:1529.40px" width="22" height="40"><path d="M0.9 12.7L16.3 22.2L0.9 31.6Z" fill="none" stroke="#000" stroke-width="1.8" stroke-linejoin="miter"/></svg><div class="t" style="left:255.00px;top:1538.49px">Production achevée</div><div class="t" style="right:2711.00px;top:1583.39px;text-align:right;font-weight:bold">26</div><svg style="left:223.3px;top:1574.60px" width="22" height="40"><path d="M0 14.3H21L10.5 30.2Z" fill="#000"/></svg><div class="t" style="left:255.00px;top:1583.39px;font-weight:bold">Postproduction</div><div class="t" style="right:2711.00px;top:1629.99px;text-align:right">27</div><svg style="left:100px;top:1628.20px" width="28" height="28"><use href="#note"/></svg><svg style="left:249.6px;top:1620.90px" width="22" height="40"><path d="M0.9 12.7L16.3 22.2L0.9 31.6Z" fill="none" stroke="#000" stroke-width="1.8" stroke-linejoin="miter"/></svg><div class="t" style="left:280.30px;top:1629.99px">Définir le calendrier de<br>maintenance</div><div class="t" style="right:2020.30px;top:1629.99px;text-align:right">1 jour</div><div class="t" style="left:992.40px;top:1629.99px">Chef de produit</div><div class="t" style="right:2711.00px;top:1704.49px;text-align:right">28</div><svg style="left:100px;top:1702.70px" width="28" height="28"><use href="#note"/></svg><svg style="left:249.6px;top:1695.40px" width="22" height="40"><path d="M0.9 12.7L16.3 22.2L0.9 31.6Z" fill="none" stroke="#000" stroke-width="1.8" stroke-linejoin="miter"/></svg><div class="t" style="left:280.30px;top:1704.49px">Rétrospective</div><div class="t" style="right:2020.30px;top:1704.49px;text-align:right">0,5 jours</div><div class="t" style="left:992.40px;top:1704.49px">Chef de projet</div>
<svg style="left:0;top:0" width="2200" height="1750"><path d="M1651.1 262.00Q1651.1 256.00 1657.1 256.00H2200V268.50H1671.4L1661.5 278.90L1651.1 268.00Z" fill="#0e98fa" stroke="#0a6fd0" stroke-width="0.8"/><path d="M1651.1 307.20Q1651.1 301.20 1657.1 301.20H2200V313.70H1671.4L1661.5 324.10L1651.1 313.20Z" fill="#0e98fa" stroke="#0a6fd0" stroke-width="0.8"/><path d="M1661.6 344.3L1676.8 359.4L1661.6 374.5L1646.4 359.4Z" fill="#0e98fa" stroke="#0a6fd0" stroke-width="0.8"/><rect x="1661.1" y="404" width="28.80" height="30.70" rx="6.5" fill="#0e98fa" stroke="#0a6fd0" stroke-width="0.8"/><rect x="1688.8" y="465.4" width="29.20" height="30.10" rx="6.5" fill="#0e98fa" stroke="#0a6fd0" stroke-width="0.8"/><rect x="1717" y="509.8" width="56.80" height="30.20" rx="6.5" fill="#0e98fa" stroke="#0a6fd0" stroke-width="0.8"/><rect x="1772.7" y="570" width="29.30" height="30.00" rx="6.5" fill="#0e98fa" stroke="#0a6fd0" stroke-width="0.8"/><rect x="1800.9" y="646" width="113.90" height="30.00" rx="6.5" fill="#0e98fa" stroke="#0a6fd0" stroke-width="0.8"/><rect x="1914.4" y="706.3" width="168.60" height="30.10" rx="6.5" fill="#0e98fa" stroke="#0a6fd0" stroke-width="0.8"/><rect x="2082" y="751.5" width="56.60" height="30.10" rx="6.5" fill="#0e98fa" stroke="#0a6fd0" stroke-width="0.8"/><rect x="2138" y="812.4" width="122.00" height="30.10" rx="6.5" fill="#0e98fa" stroke="#0a6fd0" stroke-width="0.8"/><path d="M1676.8 359.4L1691.60 359.40Q1696.1 359.4 1696.10 363.90L1696.10 377.80Q1696.1 382.3 1691.60 382.30L1641.10 382.30Q1636.6 382.3 1636.60 386.80L1636.60 414.90Q1636.6 419.4 1641.10 419.40L1654 419.4" fill="none" stroke="#000" stroke-width="1.2"/><path d="M1661.1 419.4L1652.6 415.7V423.09999999999997Z" fill="#000"/><path d="M1689.9 419.4L1705.00 419.40Q1709.5 419.4 1709.50 423.90L1709.50 452.60Q1709.5 457.1 1705.00 457.10L1668.80 457.10Q1664.3 457.1 1664.30 461.60L1664.30 475.90Q1664.3 480.4 1668.80 480.40L1681 480.4" fill="none" stroke="#000" stroke-width="1.2"/><path d="M1688.8 480.4L1680.3 476.7V484.09999999999997Z" fill="#000"/><path d="M1718 480.4L1733.20 480.40Q1737.7 480.4 1737.70 484.90L1737.7 502" fill="none" stroke="#000" stroke-width="1.2"/><path d="M1737.7 509.8L1734.0 501.3H1741.4Z" fill="#000"/><path d="M1773.8 525L1790.00 525.00Q1794.5 525 1794.50 529.50L1794.50 543.60Q1794.5 548.1 1790.00 548.10L1752.70 548.10Q1748.2 548.1 1748.20 552.60L1748.20 581.00Q1748.2 585.5 1752.70 585.50L1765 585.5" fill="none" stroke="#000" stroke-width="1.2"/><path d="M1772.7 585.5L1764.2 581.8V589.2Z" fill="#000"/><path d="M1802 585.5L1817.80 585.50Q1822.3 585.5 1822.30 590.00L1822.3 638" fill="none" stroke="#000" stroke-width="1.2"/><path d="M1822.3 646L1818.6 637.5H1826.0Z" fill="#000"/><path d="M1914.8 661L1929.90 661.00Q1934.4 661 1934.40 665.50L1934.4 698" fill="none" stroke="#000" stroke-width="1.2"/><path d="M1934.4 706.3L1930.7 697.8H1938.1000000000001Z" fill="#000"/><path d="M2083 721.3L2098.00 721.30Q2102.5 721.3 2102.50 725.80L2102.5 744" fill="none" stroke="#000" stroke-width="1.2"/><path d="M2102.5 751.5L2098.8 743.0H2106.2Z" fill="#000"/><path d="M2138.6 766.5L2153.60 766.50Q2158.1 766.5 2158.10 771.00L2158.1 805" fill="none" stroke="#000" stroke-width="1.2"/><path d="M2158.1 812.4L2154.4 803.9H2161.7999999999997Z" fill="#000"/><path d="M2124.5 1015.85L2138 1023.85L2124.5 1031.85M2138.5 1015.85L2152 1023.85L2138.5 1031.85" fill="none" stroke="#0a5fe0" stroke-width="2.4" stroke-linejoin="round"/><path d="M2124.5 1061.35L2138 1069.35L2124.5 1077.35M2138.5 1061.35L2152 1069.35L2138.5 1077.35" fill="none" stroke="#0a5fe0" stroke-width="2.4" stroke-linejoin="round"/><path d="M2124.5 1121.90L2138 1129.90L2124.5 1137.90M2138.5 1121.90L2152 1129.90L2138.5 1137.90" fill="none" stroke="#0a5fe0" stroke-width="2.4" stroke-linejoin="round"/><path d="M2124.5 1182.00L2138 1190.00L2124.5 1198.00M2138.5 1182.00L2152 1190.00L2138.5 1198.00" fill="none" stroke="#0a5fe0" stroke-width="2.4" stroke-linejoin="round"/><path d="M2124.5 1227.00L2138 1235.00L2124.5 1243.00M2138.5 1227.00L2152 1235.00L2138.5 1243.00" fill="none" stroke="#0a5fe0" stroke-width="2.4" stroke-linejoin="round"/><path d="M2124.5 1272.45L2138 1280.45L2124.5 1288.45M2138.5 1272.45L2152 1280.45L2138.5 1288.45" fill="none" stroke="#0a5fe0" stroke-width="2.4" stroke-linejoin="round"/><path d="M2124.5 1318.15L2138 1326.15L2124.5 1334.15M2138.5 1318.15L2152 1326.15L2138.5 1334.15" fill="none" stroke="#0a5fe0" stroke-width="2.4" stroke-linejoin="round"/><path d="M2124.5 1363.40L2138 1371.40L2124.5 1379.40M2138.5 1363.40L2152 1371.40L2138.5 1379.40" fill="none" stroke="#0a5fe0" stroke-width="2.4" stroke-linejoin="round"/><path d="M2124.5 1408.70L2138 1416.70L2124.5 1424.70M2138.5 1408.70L2152 1416.70L2138.5 1424.70" fill="none" stroke="#0a5fe0" stroke-width="2.4" stroke-linejoin="round"/><path d="M2124.5 1454.05L2138 1462.05L2124.5 1470.05M2138.5 1454.05L2152 1462.05L2138.5 1470.05" fill="none" stroke="#0a5fe0" stroke-width="2.4" stroke-linejoin="round"/><path d="M2124.5 1499.00L2138 1507.00L2124.5 1515.00M2138.5 1499.00L2152 1507.00L2138.5 1515.00" fill="none" stroke="#0a5fe0" stroke-width="2.4" stroke-linejoin="round"/><path d="M2124.5 1544.35L2138 1552.35L2124.5 1560.35M2138.5 1544.35L2152 1552.35L2138.5 1560.35" fill="none" stroke="#0a5fe0" stroke-width="2.4" stroke-linejoin="round"/><path d="M2124.5 1589.95L2138 1597.95L2124.5 1605.95M2138.5 1589.95L2152 1597.95L2138.5 1605.95" fill="none" stroke="#0a5fe0" stroke-width="2.4" stroke-linejoin="round"/><path d="M2124.5 1650.65L2138 1658.65L2124.5 1666.65M2138.5 1650.65L2152 1658.65L2138.5 1666.65" fill="none" stroke="#0a5fe0" stroke-width="2.4" stroke-linejoin="round"/><path d="M2124.5 1710.30L2138 1718.30L2124.5 1726.30M2138.5 1710.30L2152 1718.30L2138.5 1726.30" fill="none" stroke="#0a5fe0" stroke-width="2.4" stroke-linejoin="round"/></svg><div class="gl" style="right:1165.00px;top:256.70px;text-align:right">Site web client</div><div class="gl" style="right:1165.00px;top:301.90px;text-align:right">Préproduction</div><div class="gl" style="right:1169.50px;top:347.50px;text-align:right">Début site web client</div><div class="gl" style="left:1711.40px;top:347.50px">Client; Chef de projet; Créateur; Développeur</div><div class="gl" style="right:1178.90px;top:408.40px;text-align:right">Questionnaire et objectifs client</div><div class="gl" style="left:1724.50px;top:408.40px">Client; Chef de projet</div><div class="gl" style="right:1150.30px;top:467.90px;text-align:right">Scénarios utilisateur</div><div class="gl" style="left:1753.90px;top:467.90px">Client; Chef de produit</div><div class="gl" style="right:1098.00px;top:513.10px;text-align:right">Analyse comparative</div><div class="gl" style="left:1808.40px;top:513.10px">Chef de produit</div><div class="gl" style="right:1066.80px;top:574.20px;text-align:right">Caractéristiques techniques</div><div class="gl" style="left:1837.70px;top:574.20px">Développeur; Chef de produit</div><div class="gl" style="right:1014.20px;top:649.60px;text-align:right">Élaborer la proposition de projet</div><div class="gl" style="left:1950.20px;top:649.60px">Chef de projet</div><div class="gl" style="right:902.10px;top:709.10px;text-align:right">Définir le planning</div><div class="gl" style="left:2117.90px;top:709.10px">Chef de projet</div><div class="gl" style="right:732.90px;top:754.60px;text-align:right">Établir la liste des tâches</div><div class="gl" style="left:2175.00px;top:754.60px">Chef de projet</div><div class="gl" style="right:676.50px;top:815.30px;text-align:right">Créer le diagramme de contenu</div><div class="gl" style="left:2051.00px;top:875.10px">Communications</div><div class="gl" style="left:2047.00px;top:920.30px">Élaborer le plan de site</div><div class="gl" style="left:2060.00px;top:965.50px">Préproduction achevée</div></div></div>
<div class="a" style="left:2395.90px;top:124.97px;font-size:24px;line-height:28.8px;color:#9a9597;">Activité :</div><div class="a" style="left:2495.90px;top:124.97px;font-size:24px;line-height:28.8px;color:#efeced;">Annotations</div><div class="a" style="left:2204px;top:171px;width:573px;height:72px;border-radius:8px;background:#655e61;overflow:hidden;border-top:1px solid #7a7376"><div class="a" style="left:484px;top:-1px;width:89px;height:73px;background:#9c9798;border-top:1px solid #aaa5a6"></div></div><svg style="left:0;top:0" width="2800" height="260">
 <g fill="#e8e5e6">
  <rect x="2235.9" y="194.9" width="30.2" height="30.3" rx="1.2" fill="none" stroke="#a7a2a3" stroke-width="1.8"/>
  <rect x="2239" y="197.8" width="24.2" height="24.5" fill="#e8e5e6"/>
  <path d="M2242.8 198.5V194.5Q2242.8 192.6 2244.7 192.6H2257Q2258.9 192.6 2258.9 194.5V198.5Z" fill="#e8e5e6" stroke="#655e61" stroke-width="0.9"/>
  <circle cx="2250.8" cy="191.2" r="3.1" fill="#e8e5e6"/>
  <circle cx="2250.8" cy="191.2" r="1.3" fill="#655e61"/>
  <path d="M2242.1 211.5L2249.4 218L2260.1 204.3" fill="none" stroke="#655e61" stroke-width="4.4"/>
 </g>
 <g transform="translate(2348 207.7) rotate(-45)" fill="none" stroke="#e8e5e6" stroke-width="3.3">
  <path d="M-4 -8H-12A8 8 0 0 0 -12 8H-4"/>
  <path d="M4 -8H12A8 8 0 0 1 12 8H4"/>
  <path d="M-8.5 0H8.5" stroke="#a8a3a4" stroke-width="5" stroke-linecap="round"/>
 </g>
 <g fill="#e8e5e6">
  <rect x="2431" y="189.8" width="20" height="5" rx="2.5"/>
  <rect x="2429" y="197.5" width="20" height="5" rx="2.5"/>
  <rect x="2432" y="205.5" width="16" height="5" rx="2.5"/>
  <rect x="2429" y="213.3" width="15" height="5" rx="2.5"/>
  <rect x="2427" y="221" width="17" height="5" rx="2.5"/>
  <circle cx="2454" cy="216.5" r="12" stroke="#655e61" stroke-width="2"/>
  <path d="M2458.5 210.5Q2457.5 208.3 2454.2 208.3Q2450.2 208.3 2450.2 211.4Q2450.2 214 2454.3 215Q2458.7 216 2458.7 219.3Q2458.7 222.8 2454 222.8Q2450.5 222.8 2449.4 220.2M2454.2 205.5V225.5" fill="none" stroke="#655e61" stroke-width="2.3"/>
 </g>
 <path d="M2557.7 200.25A16.3 16.3 0 1 1 2543.6 192.1" fill="none" stroke="#e8e5e6" stroke-width="4.3"/>
 <path d="M2543.6 186L2552 191.8L2543.6 197.8Z" fill="#e8e5e6"/>
 <g stroke="#e8e5e6" fill="none">
  <circle cx="2539.5" cy="204.2" r="2.8" stroke-width="1.9"/>
  <circle cx="2547.8" cy="212.4" r="2.8" stroke-width="1.9"/>
  <path d="M2540 216.5L2547 201" stroke-width="2"/>
 </g>
 <g fill="#e8e5e6">
  <path d="M2625 190.1h20v8h-20a4 4 0 0 1 0-8zM2648.7 190.1h4.3a4 4 0 0 1 0 8h-4.3z"/>
  <path d="M2625 204h20v8h-20a4 4 0 0 1 0-8zM2648.7 204h4.3a4 4 0 0 1 0 8h-4.3z"/>
  <path d="M2625 218h20v8h-20a4 4 0 0 1 0-8zM2648.7 218h4.3a4 4 0 0 1 0 8h-4.3z"/>
  <rect x="2718" y="189.8" width="36" height="36.2" rx="2"/>
 </g>
 <g fill="#9c9798">
  <path d="M2722 221.5l2.5-6.5l16.5-16.5l4.5 4.5l-16.5 16.5z"/>
  <path d="M2742.5 197l2-2c0.8-0.8 2-0.8 2.8 0l1.7 1.7c0.8 0.8 0.8 2 0 2.8l-2 2z"/>
 </g>
</svg><div class="a" style="left:2203px;top:264px;width:576px;height:44px;border-radius:7px;background:#655e61;overflow:hidden;border-top:1px solid #777073"><div class="a" style="left:0;top:-1px;width:288px;height:45px;background:#9c9798;border-top:1px solid #aaa5a6"></div></div><div class="a" style="left:2047.00px;width:600px;top:273.91px;font-size:23.2px;line-height:27.84px;color:#efeced;text-align:center">Commentaires</div><div class="a" style="left:2335.00px;width:600px;top:273.91px;font-size:23.2px;line-height:27.84px;color:#efeced;text-align:center">Notes</div><div class="a" style="left:2203px;top:333.3px;width:576px;height:239.70px;border-radius:8px;background:#655e61"></div><div class="a av" style="left:2218.7px;top:349.30px;width:64.3px;height:65.5px;border-radius:6px;overflow:hidden"><svg viewBox="0 0 64 66" width="64.3" height="65.5" style="left:0;top:0">
<rect width="64" height="66" fill="#d6d2c8"/>
<rect x="0" y="0" width="14" height="22" fill="#5e3e30"/>
<ellipse cx="22" cy="8" rx="12" ry="6" fill="#efefef"/><ellipse cx="52" cy="16" rx="14" ry="16" fill="#f3f1ef"/>
<ellipse cx="12" cy="20" rx="7" ry="4" fill="#f0f0f0"/>
<path d="M0 22H8L6 66H0Z" fill="#8a9a60"/>
<path d="M48 66L47 42L54 26L64 28V66Z" fill="#86a04c"/>
<path d="M8 66C8 46 12 16 30 13C46 13 50 30 50 46C50 56 54 62 52 66Z" fill="#3a1812"/>
<ellipse cx="31" cy="33.5" rx="10" ry="14" fill="#dcae94"/>
<path d="M4 66C6 58 12 55 18 55L24 66Z" fill="#e07ab0"/>
<path d="M26 54H40L42 66H24Z" fill="#d8408a"/>
<path d="M26.5 40Q31 44 35.5 40" fill="none" stroke="#b83068" stroke-width="2"/>
<circle cx="27" cy="31" r="1.2" fill="#3a2020"/><circle cx="35.5" cy="31" r="1.2" fill="#3a2020"/>
</svg></div><div class="a" style="left:2299.70px;top:352.18px;font-size:27px;line-height:32.4px;color:#ecE9ea;font-weight:bold;">Chef de produit</div><div class="a" style="left:2299.70px;top:384.70px;font-size:25.9px;line-height:31.08px;color:#ecE9ea;">22/09/2020 01:30</div><div class="a" style="left:2218.70px;top:426.95px;font-size:23.8px;line-height:28.56px;color:#ecE9ea;">Le client n'a pas bien compris les scénarios</div><div class="a" style="left:2218.70px;top:452.85px;font-size:23.8px;line-height:28.56px;color:#ecE9ea;">d'utilisation et veut maintenant fournir un meilleur</div><div class="a" style="left:2218.70px;top:478.75px;font-size:23.8px;line-height:28.56px;color:#ecE9ea;">document lors de la deuxième tentative. Mais il</div><div class="a" style="left:2218.70px;top:504.65px;font-size:23.8px;line-height:28.56px;color:#ecE9ea;">aura certainement besoin de deux jours</div><div class="a" style="left:2218.70px;top:530.55px;font-size:23.8px;line-height:28.56px;color:#ecE9ea;">supplémentaires pour cela.</div><div class="a" style="left:2203px;top:589.3px;width:576px;height:161.50px;border-radius:8px;background:#655e61"></div><div class="a av" style="left:2218.7px;top:605.30px;width:64.3px;height:65.5px;border-radius:6px;overflow:hidden"><svg viewBox="0 0 64 66" width="64.3" height="65.5" style="left:0;top:0">
<rect width="64" height="66" fill="#e6e6e6"/>
<path d="M10 66C12 56 18 50 28 48L44 44C54 44 62 50 64 56V66Z" fill="#3c7aa2"/>
<path d="M28 48L36 66H44L40 46Z" fill="#262626"/>
<ellipse cx="31" cy="33" rx="11.5" ry="15.5" fill="#d7a78c"/>
<path d="M18 26C18 14 26 10 34 11C42 12 46 18 45 30L43 24C38 19 26 19 21 27Z" fill="#5a3e2c"/>
<path d="M24.5 31H29.5M33.5 30H39" stroke="#4a3020" stroke-width="1.6"/>
<path d="M27 41H35" stroke="#9a6050" stroke-width="1.4"/>
</svg></div><div class="a" style="left:2299.70px;top:608.18px;font-size:27px;line-height:32.4px;color:#ecE9ea;font-weight:bold;">Développeur</div><div class="a" style="left:2299.70px;top:640.70px;font-size:25.9px;line-height:31.08px;color:#ecE9ea;">22/09/2020 01:42</div><div class="a" style="left:2218.70px;top:682.95px;font-size:23.8px;line-height:28.56px;color:#ecE9ea;">C'est ce que je pensais déjà <svg viewBox="0 0 26 26" width="26" height="26" style="position:relative;vertical-align:-6px;margin:0 1px 0 0">
<defs><radialGradient id="eg" cx="45%" cy="35%" r="65%"><stop offset="0" stop-color="#ffe27a"/><stop offset="1" stop-color="#f2a31b"/></radialGradient></defs>
<circle cx="13" cy="13" r="12.5" fill="url(#eg)"/>
<path d="M6.5 10.5Q8.5 8 10.5 10.5" fill="none" stroke="#6b3b10" stroke-width="1.5"/>
<ellipse cx="17" cy="10" rx="1.5" ry="2.2" fill="#6b3b10"/>
<path d="M8 16Q13 21 19 15" fill="none" stroke="#6b3b10" stroke-width="1.6"/>
<circle cx="6" cy="15" r="2.2" fill="#f08a6a" opacity="0.6"/>
</svg>. Le premier essai</div><div class="a" style="left:2218.70px;top:708.85px;font-size:23.8px;line-height:28.56px;color:#ecE9ea;">n'a pas été très réussi.</div><div class="a" style="left:2203px;top:767.5px;width:576px;height:187.00px;border-radius:8px;background:#655e61"></div><div class="a av" style="left:2218.7px;top:783.50px;width:64.3px;height:65.5px;border-radius:6px;overflow:hidden"><svg viewBox="0 0 64 66" width="64.3" height="65.5" style="left:0;top:0">
<rect width="64" height="66" fill="#efefef"/>
<path d="M3 66C3 40 8 13 32 12C52 13 56 34 56 52L54 66Z" fill="#141010"/>
<path d="M20 66L24 56H46L54 62V66Z" fill="#a8a4a2"/>
<ellipse cx="34" cy="43" rx="14.5" ry="19" fill="#a8643a"/>
<g fill="none" stroke="#3a2010" stroke-width="1.6"><rect x="20" y="36" width="12" height="9" rx="3"/><rect x="36" y="34" width="12" height="9" rx="3"/><path d="M32 39L36 38"/></g>
<path d="M27 52Q35 57 43 51" fill="#f4f0ea" stroke="#6a3020" stroke-width="1.2"/>
</svg></div><div class="a" style="left:2299.70px;top:786.38px;font-size:27px;line-height:32.4px;color:#ecE9ea;font-weight:bold;">Créateur</div><div class="a" style="left:2299.70px;top:818.90px;font-size:25.9px;line-height:31.08px;color:#ecE9ea;">22/09/2020 02:06</div><div class="a" style="left:2218.70px;top:861.15px;font-size:23.8px;line-height:28.56px;color:#ecE9ea;">Hé <b>Chef de projet</b>, tu ne peux pas envoyer au</div><div class="a" style="left:2218.70px;top:887.05px;font-size:23.8px;line-height:28.56px;color:#ecE9ea;">client le document de la dernière fois ? C'était</div><div class="a" style="left:2218.70px;top:912.95px;font-size:23.8px;line-height:28.56px;color:#ecE9ea;">vraiment très bien élaboré !</div><div class="a" style="left:2203px;top:971.2px;width:576px;height:135.40px;border-radius:8px;background:#655e61"></div><div class="a av" style="left:2218.7px;top:987.20px;width:64.3px;height:65.5px;border-radius:6px;overflow:hidden"><svg viewBox="0 0 64 66" width="64.3" height="65.5" style="left:0;top:0">
<rect width="64" height="66" fill="#e6ddd0"/>
<rect x="32" y="0" width="4" height="20" fill="#d2c6b6"/>
<path d="M6 66C5 46 10 18 30 16C48 16 54 34 54 50L56 66Z" fill="#4a2e20"/>
<ellipse cx="30" cy="41" rx="10.5" ry="14.5" fill="#dcac8c"/>
<path d="M12 66L20 60H44L48 66Z" fill="#d8d0c8"/>
<path d="M24.5 46Q30 50 35.5 45" fill="#f0e8e0" stroke="#7a4030" stroke-width="1.2"/>
<circle cx="26" cy="37" r="1.2" fill="#3a2020"/><circle cx="34" cy="37" r="1.2" fill="#3a2020"/>
</svg></div><div class="a" style="left:2299.70px;top:990.08px;font-size:27px;line-height:32.4px;color:#ecE9ea;font-weight:bold;">Chef de projet</div><div class="a" style="left:2299.70px;top:1022.60px;font-size:25.9px;line-height:31.08px;color:#ecE9ea;">22/09/2020 02:48</div><div class="a" style="left:2218.70px;top:1064.85px;font-size:23.8px;line-height:28.56px;color:#ecE9ea;">Non <b>Créateur</b>, malheureusement c'est sous NDA !</div><div class="a" style="left:2203px;top:1671.3px;width:474px;height:59px;border-radius:8px;background:#655e61"></div><div class="a" style="left:2140.00px;width:600px;top:1688.82px;font-size:23.3px;line-height:27.96px;color:#efeced;text-align:center">Nouveau commentaire</div><div class="a" style="left:2693.2px;top:1671.3px;width:85.6px;height:59px;border-radius:8px;background:#655e61"></div><svg style="left:0;top:0" width="2800" height="1750">
 <circle cx="2727" cy="1700.7" r="12.6" fill="none" stroke="#e8e5e6" stroke-width="1.5"/>
 <g fill="#e8e5e6"><circle cx="2721" cy="1700.7" r="1.9"/><circle cx="2727" cy="1700.7" r="1.9"/><circle cx="2733" cy="1700.7" r="1.9"/></g>
 <path d="M2746.2 1698L2752 1703.8L2757.8 1698" fill="none" stroke="#e8e5e6" stroke-width="1.5"/>
</svg>
<div class="a" style="left:839px;top:1052.7px;width:1086.5px;height:558.3px;border-radius:10px;overflow:hidden;background:#fff;box-shadow:0 0 0 1px rgba(0,0,0,0.12),0 10px 28px rgba(0,0,0,0.32)"><div class="a" style="left:-839px;top:-1052.7px;width:2800px;height:1750px"><div class="a" style="left:839px;top:1052.7px;width:1087px;height:39.5px;background:#f3eced"></div><div class="a" style="left:839px;top:1092.2px;width:1087px;height:68.3px;background:#efe9ea"></div><div class="a" style="left:839px;top:1160px;width:1087px;height:1.2px;background:#d9d3d5"></div><div class="a" style="left:839px;top:1091.4px;width:24px;height:1px;background:#cdc7c9"></div><div class="a" style="left:839px;top:1161.2px;width:1087px;height:60.2px;background:#efe9ea"></div><div class="a" style="left:839px;top:1221px;width:1087px;height:1.2px;background:#cbc5c7"></div><div class="a" style="left:839px;top:1222.2px;width:1087px;height:41px;background:#f0eaeb"></div><div class="a" style="left:839px;top:1263.2px;width:1087px;height:1.2px;background:#cbc5c7"></div><div class="a" style="left:897.4px;top:1222px;width:1.2px;height:41.5px;background:#cfc9cb"></div><div class="a" style="left:1189.9px;top:1222px;width:1.2px;height:41.5px;background:#cfc9cb"></div><div class="a" style="left:1449.9px;top:1222px;width:1.2px;height:41.5px;background:#cfc9cb"></div><div class="a" style="left:848.40px;top:1061.70px;width:18.6px;height:18.6px;border-radius:50%;background:#fe5f57;border:0.8px solid #e2463f"></div><div class="a" style="left:878.40px;top:1061.70px;width:18.6px;height:18.6px;border-radius:50%;background:#febc2e;border:0.8px solid #e1a123"></div><div class="a" style="left:908.40px;top:1061.70px;width:18.6px;height:18.6px;border-radius:50%;background:#28c840;border:0.8px solid #1aab29"></div><div class="a" style="left:1081.00px;width:600px;top:1054.97px;font-size:24px;line-height:28.8px;color:#4b4648;text-align:center">Notifications</div><div class="a" style="left:1059.5px;top:1107px;width:645.5px;height:36px;border-radius:8px;background:#e2dcde"></div><div class="a" style="left:1061.5px;top:1109px;width:170px;height:32px;border-radius:7px;background:#fff;box-shadow:0 0.5px 2px rgba(0,0,0,0.25)"></div><div class="a" style="left:1383.0px;top:1115px;width:1.2px;height:19.5px;background:#c9c3c5"></div><div class="a" style="left:1496.7px;top:1115px;width:1.2px;height:19.5px;background:#c9c3c5"></div><div class="a" style="left:1608.9px;top:1115px;width:1.2px;height:19.5px;background:#c9c3c5"></div><div class="a" style="left:845.00px;width:600px;top:1110.51px;font-size:23.1px;line-height:27.72px;color:#222;text-align:center">Commentaires</div><div class="a" style="left:1006.80px;width:600px;top:1110.51px;font-size:23.1px;line-height:27.72px;color:#222;text-align:center">Planification</div><div class="a" style="left:1139.80px;width:600px;top:1110.51px;font-size:23.1px;line-height:27.72px;color:#222;text-align:center">Importer</div><div class="a" style="left:1253.90px;width:600px;top:1110.51px;font-size:23.1px;line-height:27.72px;color:#222;text-align:center">Exporter</div><div class="a" style="left:1357.30px;width:600px;top:1110.51px;font-size:23.1px;line-height:27.72px;color:#222;text-align:center">Publier</div><div class="a" style="left:859.5px;top:1180px;width:22.5px;height:22.5px;border-radius:5px;background:#fff;border:1px solid #c9c3c5"></div><div class="a" style="left:891.00px;top:1177.13px;font-size:23.5px;line-height:28.2px;color:#1e1e1e;">Ouvrez cette fenêtre lorsque de nouveaux commentaires apparaissent</div><svg style="left:0;top:0" width="1950" height="1300"><path d="M1899.5 1185.5A8.5 8.5 0 1 1 1888 1184.2" fill="none" stroke="#b9b4b6" stroke-width="1.6"/><path d="M1893.5 1179.5L1893.5 1188L1887 1184Z" fill="#b9b4b6"/></svg><div class="a" style="left:910.50px;top:1229.91px;font-size:23.1px;line-height:27.72px;color:#222;">Origine</div><div class="a" style="left:1202.70px;top:1229.91px;font-size:23.1px;line-height:27.72px;color:#222;">Auteur</div><div class="a" style="left:1461.80px;top:1229.91px;font-size:23.1px;line-height:27.72px;color:#222;">Commentaire</div><div class="a" style="left:858.7px;top:1287.40px;width:18px;height:18px;border-radius:50%;background:#1a7bf2"></div><div class="a" style="left:858.7px;top:1364.00px;width:18px;height:18px;border-radius:50%;background:#1a7bf2"></div><div class="a" style="left:910.50px;top:1282.63px;font-size:23.5px;line-height:28.2px;color:#1e1e1e;">Scénarios utilisateur</div><div class="a" style="left:1201.80px;top:1282.63px;font-size:23.5px;line-height:28.2px;color:#1e1e1e;">Chef de projet</div><div class="a" style="left:1461.80px;top:1269.03px;font-size:23.5px;line-height:28.2px;color:#1e1e1e;">Non Créateur, malheureusement c'est</div><div class="a" style="left:1461.80px;top:1295.43px;font-size:23.5px;line-height:28.2px;color:#1e1e1e;">sous NDA !</div><div class="a" style="left:910.50px;top:1359.93px;font-size:23.5px;line-height:28.2px;color:#1e1e1e;">Scénarios utilisateur</div><div class="a" style="left:1201.80px;top:1359.93px;font-size:23.5px;line-height:28.2px;color:#1e1e1e;">Créateur</div><div class="a" style="left:1461.80px;top:1333.63px;font-size:23.5px;line-height:28.2px;color:#1e1e1e;">Hé Chef de projet, tu ne peux pas envoyer</div><div class="a" style="left:1461.80px;top:1359.73px;font-size:23.5px;line-height:28.2px;color:#1e1e1e;">au client le document de la dernière fois ?</div><div class="a" style="left:1461.80px;top:1385.83px;font-size:23.5px;line-height:28.2px;color:#1e1e1e;">C'était vraiment très bien élaboré !</div></div></div>
</div></div>
<div class="a" style="left:1px;top:3px;width:2800px;height:1748.6px;border-radius:19px;box-shadow:inset 0 0 0 1px rgba(255,255,255,0.08);pointer-events:none"></div>
</body></html>
